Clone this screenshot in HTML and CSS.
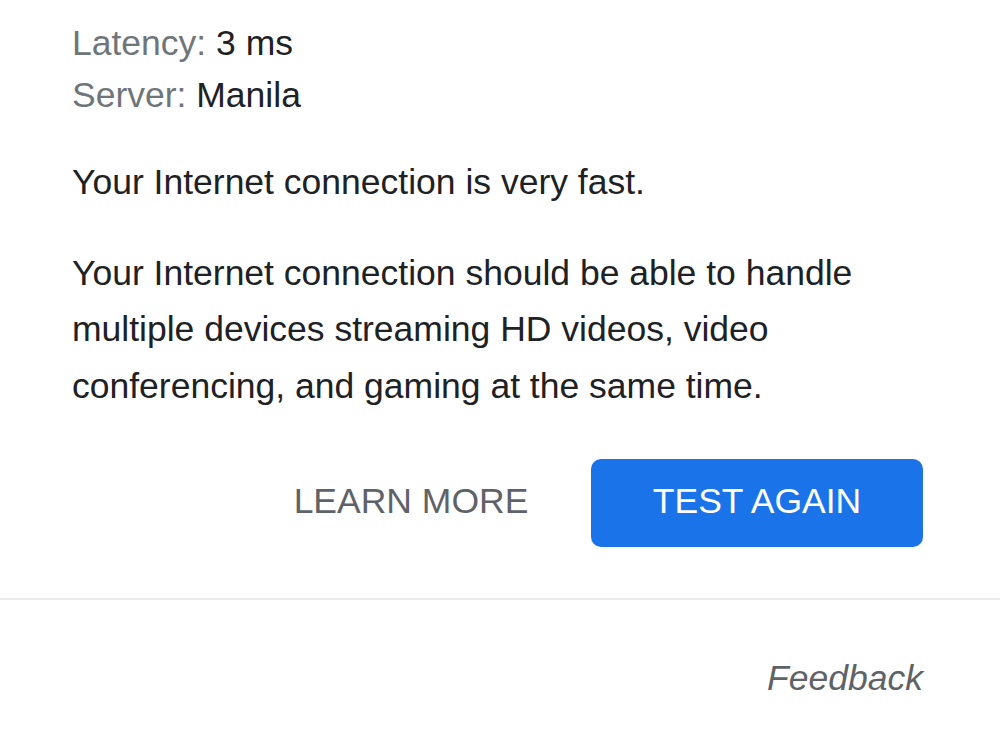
FILE: index.html
```html
<!DOCTYPE html>
<html lang="en">
<head>
    <meta charset="UTF-8">
    <meta name="viewport" content="width=device-width, initial-scale=1.0">
    <title>Internet Speed Test</title>
    <link rel="stylesheet" href="styles.css">
</head>
<body>
    <div class="card">
        <div class="content">
            <div class="details">
                <div class="detail-row"><span class="label">Latency:</span> <span class="value">3 ms</span></div>
                <div class="detail-row"><span class="label">Server:</span> <span class="value">Manila</span></div>
            </div>

            <p class="verdict">Your Internet connection is very fast.</p>

            <p class="description">Your Internet connection should be able to handle multiple devices streaming HD videos, video conferencing, and gaming at the same time.</p>

            <div class="actions">
                <button class="btn btn-text">LEARN MORE</button>
                <button class="btn btn-primary">TEST AGAIN</button>
            </div>
        </div>

        <div class="footer">
            <a class="feedback" href="#">Feedback</a>
        </div>
    </div>
</body>
</html>
```

FILE: styles.css
```css
body {
    margin: 0;
    padding: 0;
    background-color: #fff;
    font-family: "Liberation Sans", Arial, sans-serif;
    font-size: 35.5px;
    color: #202124;
}

.card {
    width: 1000px;
    background-color: #fff;
}

.content {
    padding: 17px 77px 51px 72px;
}

.details {
    line-height: 52px;
}

.label {
    color: #70757a;
}

.value {
    color: #202124;
}

.verdict {
    margin: 33px 0 0;
    line-height: 56.5px;
}

.description {
    margin: 34px 0 0;
    line-height: 56.5px;
}

.actions {
    display: flex;
    justify-content: flex-end;
    margin-top: 45px;
}

.btn {
    font-family: inherit;
    font-size: 35.5px;
    height: 88px;
    padding: 0 0 4px;
    border: none;
    border-radius: 10px;
    background: none;
    cursor: pointer;
}

.btn-text {
    color: #5f6368;
    width: 360px;
}

.btn-primary {
    background-color: #1a73e8;
    color: #fff;
    width: 332px;
}

.footer {
    border-top: 2px solid #ececec;
    padding: 58px 77px 40px 72px;
    text-align: right;
    line-height: 40px;
}

.feedback {
    color: #5f6368;
    font-style: italic;
    text-decoration: none;
}
```
